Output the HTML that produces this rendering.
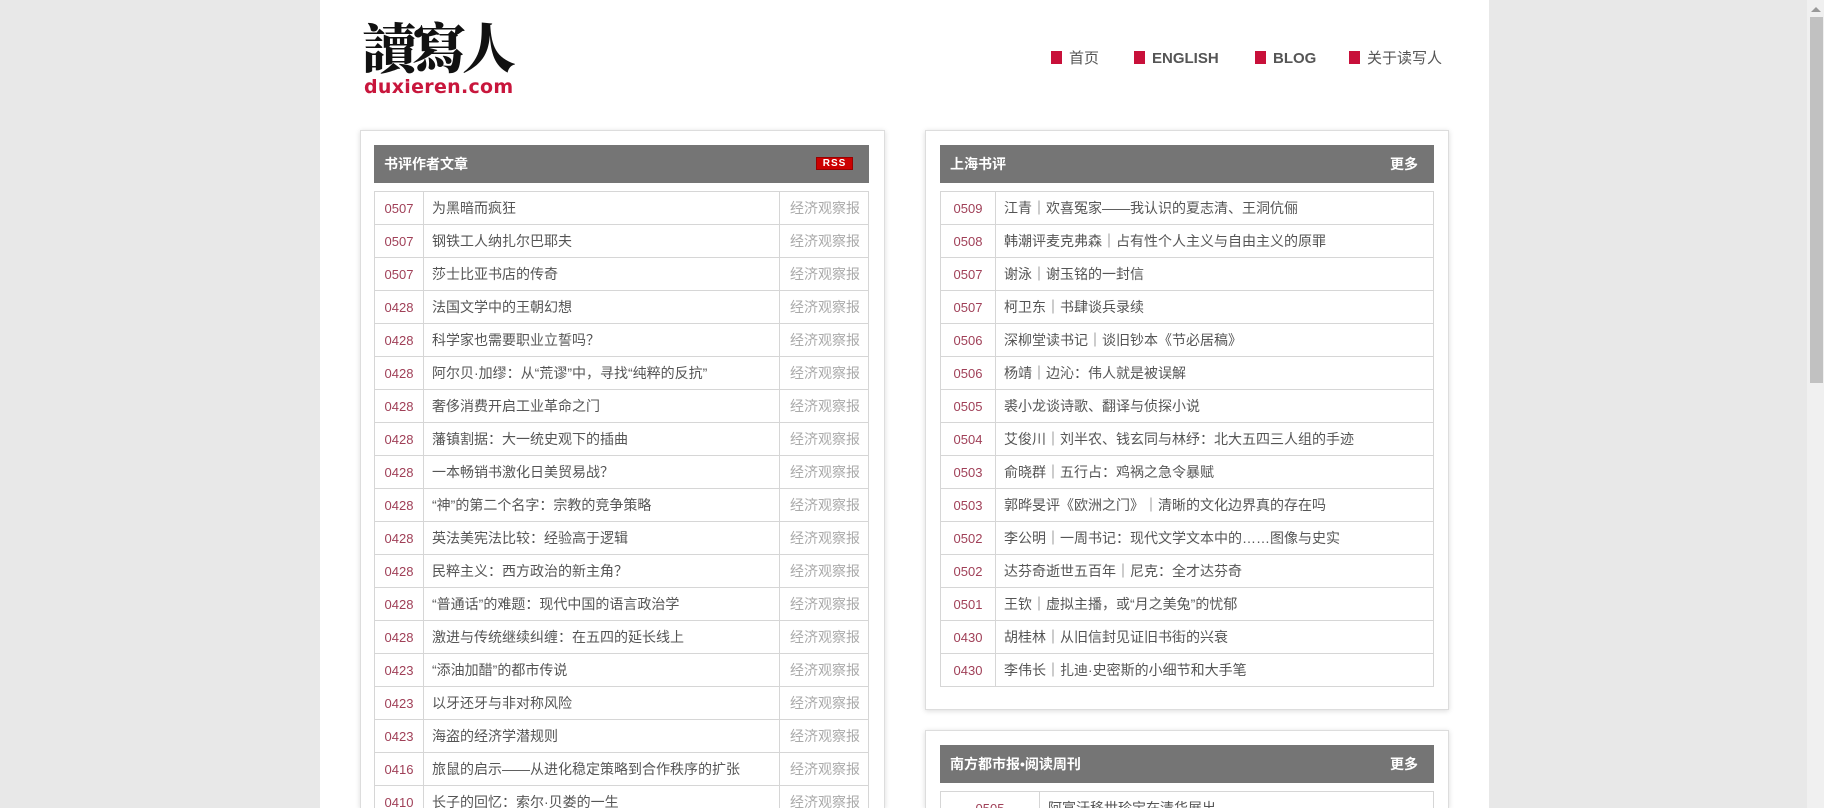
<!DOCTYPE html>
<html><head><meta charset="utf-8"><style>
*{margin:0;padding:0;box-sizing:border-box}
html,body{width:1824px;height:808px;overflow:hidden}
body{background:#e8e8e8;font-family:"Liberation Sans","Noto Sans CJK SC",sans-serif}
#wrap{position:relative;width:1824px;height:808px;overflow:hidden;background:#e8e8e8}
#page{position:absolute;left:320px;top:0;width:1169px;height:808px;background:#fff}
.logo{position:absolute;left:362px;top:14px;font-family:"Noto Serif CJK SC",serif;font-weight:900;font-size:54px;line-height:64px;color:#111;letter-spacing:-4px}
.dom{position:absolute;left:364px;top:76px;font-size:19px;font-weight:bold;color:#c8163c;letter-spacing:0.3px;font-family:"DejaVu Sans",sans-serif}
.nav{position:absolute;top:49px;font-size:15px;color:#555;font-weight:bold;line-height:20px}
.nav i{position:absolute;left:-18px;top:2px;width:11px;height:13px;background:#c8103a}
.box{position:absolute;background:#fff;border:1px solid #ddd;border-bottom:none;box-shadow:0 1px 5px rgba(0,0,0,.15)}
.hd{position:absolute;height:38px;background:#757575;color:#fff;font-weight:bold;font-size:14px;line-height:38px;padding-left:10px}
.hd .m{position:absolute;right:16px;top:0}
.rss{position:absolute;right:16px;top:12px;width:37px;height:13px;background:#c00;border:1px solid #900;color:#fff;font-size:10px;line-height:12px;text-align:center;font-weight:bold;letter-spacing:1px}
.tw{position:absolute;overflow:hidden}
table{border-collapse:collapse;font-size:14px;width:100%}
td{border:1px solid #d6d6d6;height:33px;padding:0 8px;white-space:nowrap;color:#555}
td.d{color:#a04058;text-align:center;padding:0;font-size:13px}
td.s{color:#aaa;text-align:right}
.sb{position:absolute;left:1807px;top:0;width:17px;height:808px;background:#f0f0f0}
.th{position:absolute;left:1810px;top:17px;width:13px;height:366px;background:#c1c1c1}
.ar{position:absolute;left:1811px;top:7px;width:0;height:0;border-left:5px solid transparent;border-right:5px solid transparent;border-bottom:5px solid #999}
</style></head><body><div id="wrap">
<div id="page"></div>
<div class="logo">讀寫人</div>
<div class="dom">duxieren.com</div>
<div class="nav" style="left:1069px;font-weight:normal"><i></i>首页</div>
<div class="nav" style="left:1152px"><i></i>ENGLISH</div>
<div class="nav" style="left:1273px"><i></i>BLOG</div>
<div class="nav" style="left:1367px;font-weight:normal"><i></i>关于读写人</div>

<div class="box" style="left:360px;top:130px;width:525px;height:678px"></div>
<div class="hd" style="left:374px;top:145px;width:495px">书评作者文章<span class="rss">RSS</span></div>
<div class="tw" style="left:374px;top:191px;width:495px;height:617px">
<table>
<colgroup><col style="width:49px"><col><col style="width:89px"></colgroup>
<tr><td class="d">0507</td><td>为黑暗而疯狂</td><td class="s">经济观察报</td></tr>
<tr><td class="d">0507</td><td>钢铁工人纳扎尔巴耶夫</td><td class="s">经济观察报</td></tr>
<tr><td class="d">0507</td><td>莎士比亚书店的传奇</td><td class="s">经济观察报</td></tr>
<tr><td class="d">0428</td><td>法国文学中的王朝幻想</td><td class="s">经济观察报</td></tr>
<tr><td class="d">0428</td><td>科学家也需要职业立誓吗？</td><td class="s">经济观察报</td></tr>
<tr><td class="d">0428</td><td>阿尔贝·加缪：从“荒谬”中，寻找“纯粹的反抗”</td><td class="s">经济观察报</td></tr>
<tr><td class="d">0428</td><td>奢侈消费开启工业革命之门</td><td class="s">经济观察报</td></tr>
<tr><td class="d">0428</td><td>藩镇割据：大一统史观下的插曲</td><td class="s">经济观察报</td></tr>
<tr><td class="d">0428</td><td>一本畅销书激化日美贸易战？</td><td class="s">经济观察报</td></tr>
<tr><td class="d">0428</td><td>“神”的第二个名字：宗教的竞争策略</td><td class="s">经济观察报</td></tr>
<tr><td class="d">0428</td><td>英法美宪法比较：经验高于逻辑</td><td class="s">经济观察报</td></tr>
<tr><td class="d">0428</td><td>民粹主义：西方政治的新主角？</td><td class="s">经济观察报</td></tr>
<tr><td class="d">0428</td><td>“普通话”的难题：现代中国的语言政治学</td><td class="s">经济观察报</td></tr>
<tr><td class="d">0428</td><td>激进与传统继续纠缠：在五四的延长线上</td><td class="s">经济观察报</td></tr>
<tr><td class="d">0423</td><td>“添油加醋”的都市传说</td><td class="s">经济观察报</td></tr>
<tr><td class="d">0423</td><td>以牙还牙与非对称风险</td><td class="s">经济观察报</td></tr>
<tr><td class="d">0423</td><td>海盗的经济学潜规则</td><td class="s">经济观察报</td></tr>
<tr><td class="d">0416</td><td>旅鼠的启示——从进化稳定策略到合作秩序的扩张</td><td class="s">经济观察报</td></tr>
<tr><td class="d">0410</td><td>长子的回忆：索尔·贝娄的一生</td><td class="s">经济观察报</td></tr>
</table></div>

<div class="box" style="left:925px;top:130px;width:524px;height:580px;border-bottom:1px solid #ddd"></div>
<div class="hd" style="left:940px;top:145px;width:494px">上海书评<span class="m">更多</span></div>
<div class="tw" style="left:940px;top:191px;width:494px;height:500px">
<table>
<colgroup><col style="width:55px"><col></colgroup>
<tr><td class="d">0509</td><td>江青｜欢喜冤家——我认识的夏志清、王洞伉俪</td></tr>
<tr><td class="d">0508</td><td>韩潮评麦克弗森｜占有性个人主义与自由主义的原罪</td></tr>
<tr><td class="d">0507</td><td>谢泳｜谢玉铭的一封信</td></tr>
<tr><td class="d">0507</td><td>柯卫东｜书肆谈兵录续</td></tr>
<tr><td class="d">0506</td><td>深柳堂读书记｜谈旧钞本《节必居稿》</td></tr>
<tr><td class="d">0506</td><td>杨靖｜边沁：伟人就是被误解</td></tr>
<tr><td class="d">0505</td><td>裘小龙谈诗歌、翻译与侦探小说</td></tr>
<tr><td class="d">0504</td><td>艾俊川｜刘半农、钱玄同与林纾：北大五四三人组的手迹</td></tr>
<tr><td class="d">0503</td><td>俞晓群｜五行占：鸡祸之急令暴赋</td></tr>
<tr><td class="d">0503</td><td>郭晔旻评《欧洲之门》｜清晰的文化边界真的存在吗</td></tr>
<tr><td class="d">0502</td><td>李公明｜一周书记：现代文学文本中的……图像与史实</td></tr>
<tr><td class="d">0502</td><td>达芬奇逝世五百年｜尼克：全才达芬奇</td></tr>
<tr><td class="d">0501</td><td>王钦｜虚拟主播，或“月之美兔”的忧郁</td></tr>
<tr><td class="d">0430</td><td>胡桂林｜从旧信封见证旧书街的兴衰</td></tr>
<tr><td class="d">0430</td><td>李伟长｜扎迪·史密斯的小细节和大手笔</td></tr>
</table></div>

<div class="box" style="left:925px;top:730px;width:524px;height:78px"></div>
<div class="hd" style="left:940px;top:745px;width:494px">南方都市报•阅读周刊<span class="m">更多</span></div>
<div class="tw" style="left:940px;top:791px;width:494px;height:17px">
<table>
<colgroup><col style="width:99px"><col></colgroup>
<tr><td class="d">0505</td><td>阿富汗移世珍宝在清华展出</td></tr>
</table></div>

<div class="sb"></div><div class="th"></div><div class="ar"></div>
</div></body></html>
